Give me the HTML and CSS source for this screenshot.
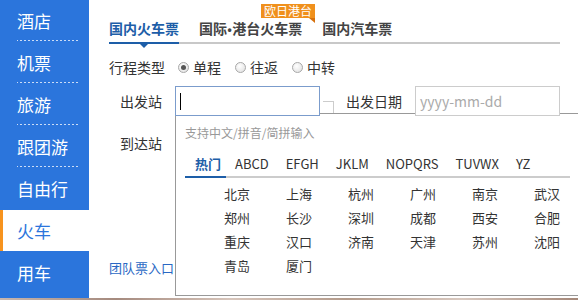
FILE: index.html
```html
<!DOCTYPE html>
<html lang="zh-CN">
<head>
<meta charset="utf-8">
<title>火车票</title>
<link rel="stylesheet" href="styles.css">
</head>
<body>
<div class="page">
  <nav class="side">
    <div class="side-item">酒店</div>
    <div class="side-item">机票</div>
    <div class="side-item">旅游</div>
    <div class="side-item">跟团游</div>
    <div class="side-item">自由行</div>
    <div class="side-item active">火车</div>
    <div class="side-item last">用车</div>
  </nav>
  <main class="main">
    <div class="tabs">
      <div class="tab active">国内火车票</div>
      <div class="tab intl">国际<span class="dot">•</span>港台火车票<span class="badge">欧日港台</span></div>
      <div class="tab">国内汽车票</div>
    </div>
    <div class="trip">
      <span class="trip-label">行程类型</span>
      <span class="radio checked"></span><span class="radio-text">单程</span>
      <span class="radio"></span><span class="radio-text">往返</span>
      <span class="radio"></span><span class="radio-text">中转</span>
    </div>
    <div class="field-row">
      <span class="lbl">出发站</span>
      <div class="input focus"><span class="caret"></span></div>
      <span class="ghost"></span>
      <span class="lbl2">出发日期</span>
      <div class="input date">yyyy-mm-dd</div>
    </div>
    <div class="field-row arrive">
      <span class="lbl">到达站</span>
    </div>
    <a class="team">团队票入口</a>

    <div class="dropdown">
      <div class="hint">支持中文/拼音/简拼输入</div>
      <div class="letters">
        <span class="letter active">热门</span>
        <span class="letter">ABCD</span>
        <span class="letter">EFGH</span>
        <span class="letter">JKLM</span>
        <span class="letter">NOPQRS</span>
        <span class="letter">TUVWX</span>
        <span class="letter">YZ</span>
      </div>
      <div class="cities">
        <span>北京</span><span>上海</span><span>杭州</span><span>广州</span><span>南京</span><span>武汉</span>
        <span>郑州</span><span>长沙</span><span>深圳</span><span>成都</span><span>西安</span><span>合肥</span>
        <span>重庆</span><span>汉口</span><span>济南</span><span>天津</span><span>苏州</span><span>沈阳</span>
        <span>青岛</span><span>厦门</span>
      </div>
    </div>
  </main>
</div>
<div class="strip"></div>
</body>
</html>
```

FILE: styles.css
```css
html, body {
  margin: 0;
  padding: 0;
  background: #fff;
  overflow: hidden;
}
body {
  width: 578px;
  height: 300px;
  font-family: "Noto Sans CJK SC", "Noto Sans", sans-serif;
  color: #333;
}
.page {
  display: flex;
  height: 298px;
}
.side {
  width: 89px;
  flex: none;
  background: #2b75dc;
  display: flex;
  flex-direction: column;
}
.side-item {
  height: 41px;
  line-height: 41px;
  padding-left: 17px;
  font-size: 17px;
  color: #fff;
  position: relative;
  background-image: linear-gradient(to right, rgba(255,255,255,0.75) 50%, transparent 50%);
  background-size: 4px 1px;
  background-repeat: repeat-x;
  background-position: 16px 100%;
  background-clip: content-box;
  border-bottom: 1px solid transparent;
  margin-right: 11px;
}
.side-item.active {
  background: #fff;
  color: #2b75dc;
  margin-right: 0;
  margin-bottom: 1px;
  border-bottom: 0;
}
.side-item.active::before {
  content: "";
  position: absolute;
  left: 0;
  top: 0;
  bottom: 0;
  width: 3px;
  background: #f7931e;
}
.side-item:nth-child(5),
.side-item.last {
  background-image: none;
}
.main {
  flex: 1;
  position: relative;
  padding: 0 18px 0 20px;
  overflow: hidden;
}
.tabs {
  display: flex;
  gap: 20px;
  padding-top: 18px;
  border-bottom: 2px solid #c8c8c8;
}
.tab {
  position: relative;
  font-size: 14px;
  font-weight: bold;
  line-height: 20px;
  padding-bottom: 2px;
  color: #444;
}
.tab .dot {
  font-family: "Liberation Sans", sans-serif;
  font-size: 12px;
  padding: 0 0.5px;
}
.tab.active {
  color: #1d5ea8;
}
.tab.active::after {
  content: "";
  position: absolute;
  left: 0;
  right: 0;
  bottom: -2px;
  height: 2px;
  background: #1d5ea8;
}
.tab.active::before {
  content: "";
  position: absolute;
  left: 50%;
  margin-left: -4px;
  bottom: -6px;
  border: 4px solid transparent;
  border-top-color: #1d5ea8;
  border-bottom: 0;
}
.badge {
  position: absolute;
  left: 62px;
  top: -14px;
  background: #f0901c;
  color: #fff;
  font-size: 12px;
  font-weight: normal;
  line-height: 14px;
  padding: 0 3px;
  white-space: nowrap;
}
.badge::after {
  content: "";
  position: absolute;
  right: 0;
  top: 14px;
  border-top: 5px solid #d6700c;
  border-left: 6px solid transparent;
}
.trip {
  display: flex;
  align-items: center;
  margin-top: 13px;
  height: 20px;
  font-size: 14px;
}
.radio {
  width: 11px;
  height: 11px;
  border-radius: 50%;
  border: 1px solid #a8a8a8;
  background: radial-gradient(circle at 40% 35%, #fff, #ddd);
  box-sizing: border-box;
  margin: 0 4px 0 14px;
  position: relative;
}
.trip-label + .radio {
  margin-left: 13px;
}
.radio.checked::after {
  content: "";
  position: absolute;
  left: 2px;
  top: 2px;
  width: 5px;
  height: 5px;
  border-radius: 50%;
  background: #555;
}
.field-row {
  display: flex;
  align-items: center;
  margin-top: 9px;
  height: 30px;
  font-size: 14px;
}
.field-row.arrive {
  margin-top: 12px;
}
.lbl {
  width: 53px;
  padding-right: 13px;
  text-align: right;
}
.input {
  width: 145px;
  height: 30px;
  box-sizing: border-box;
  border: 1px solid #ccc;
  position: relative;
  z-index: 2;
  background: #fff;
}
.input.focus {
  border-color: #7b9ccc;
}
.caret {
  position: absolute;
  left: 4px;
  top: 6px;
  width: 1px;
  height: 17px;
  background: #000;
}
.ghost {
  align-self: flex-end;
  width: 11px;
  height: 15px;
  margin: 0 12px 0 3px;
  border-top: 1px solid #ccc;
  border-right: 1px solid #ccc;
  box-sizing: border-box;
}
.lbl2 {
  margin-right: 13px;
}
.input.date {
  color: #aaa;
  line-height: 28px;
  padding-left: 4px;
}
.team {
  display: block;
  margin-top: 102px;
  font-size: 13px;
  line-height: 16px;
  color: #2a68c4;
}
.dropdown {
  position: absolute;
  left: 86px;
  top: 113px;
  width: 402px;
  height: 181px;
  border: 1px solid #999;
  border-right: 0;
  background: #fff;
  z-index: 1;
}
.hint {
  padding: 11px 0 0 9px;
  font-size: 12px;
  line-height: 16px;
  color: #999;
}
.letters {
  display: flex;
  margin: 13px 0 0 9px;
  width: 385px;
  border-bottom: 2px solid #ccc;
  font-size: 13px;
}
.letter {
  position: relative;
  line-height: 20px;
  padding: 0 8px 2px 9px;
  color: #333;
}
.letter.active {
  padding: 0 5px 2px 10px;
  font-weight: bold;
  color: #1d5ea8;
}
.letter.active::after {
  content: "";
  position: absolute;
  left: 0;
  right: 0;
  bottom: -2px;
  height: 2px;
  background: #1d5ea8;
}
.cities {
  display: grid;
  grid-template-columns: repeat(6, 62px);
  margin: 4px 0 0 48px;
  font-size: 13px;
  line-height: 24px;
  color: #333;
}
.strip {
  height: 2px;
  background: linear-gradient(to right, #c9b7ae 0%, #a58a7e 20%, #d7c5bb 40%, #b39a8a 60%, #d9c9c0 80%, #a48778 100%);
}
```
